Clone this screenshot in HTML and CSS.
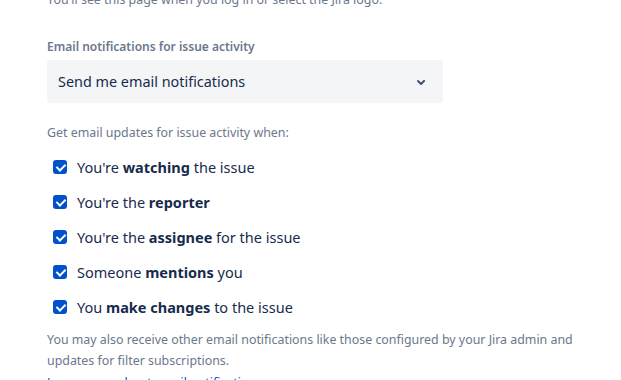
FILE: index.html
```html
<!DOCTYPE html>
<html lang="en">
<head>
    <meta charset="UTF-8">
    <meta name="viewport" content="width=device-width, initial-scale=1.0">
    <title>Email notifications</title>
    <link rel="stylesheet" href="styles.css">
</head>
<body>

    <div class="settings-page">
        <p class="intro">You'll see this page when you log in or select the Jira logo.</p>

        <!-- Email notifications section -->
        <div class="field">
            <label class="field-label" for="emailSelect">Email notifications for issue activity</label>
            <div class="select-box" id="emailSelect">
                <span>Send me email notifications</span>
                <svg class="chevron" width="24" height="24" viewBox="0 0 24 24">
                    <path d="M8.3 10.3a1 1 0 0 1 1.4 0L12 12.6l2.3-2.3a1 1 0 1 1 1.4 1.4l-3 3a1 1 0 0 1-1.4 0l-3-3a1 1 0 0 1 0-1.4z" fill="#42526e"/>
                </svg>
            </div>
        </div>

        <p class="hint">Get email updates for issue activity when:</p>

        <ul class="checkbox-list">
            <li class="checkbox-row"><span class="checkbox"></span><span>You're <b>watching</b> the issue</span></li>
            <li class="checkbox-row"><span class="checkbox"></span><span>You're the <b>reporter</b></span></li>
            <li class="checkbox-row"><span class="checkbox"></span><span>You're the <b>assignee</b> for the issue</span></li>
            <li class="checkbox-row"><span class="checkbox"></span><span>Someone <b>mentions</b> you</span></li>
            <li class="checkbox-row"><span class="checkbox"></span><span>You <b>make changes</b> to the issue</span></li>
        </ul>

        <p class="note">You may also receive other email notifications like those configured by your Jira admin and updates for filter subscriptions.</p>
        <a class="manage-link" href="#">Learn more about email notifications</a>
    </div>

</body>
</html>
```

FILE: styles.css
```css
/* Basic reset */
* {
    margin: 0;
    padding: 0;
    box-sizing: border-box;
}

body {
    font-family: 'Noto Sans', 'Open Sans', sans-serif;
    color: #172b4d;
    background-color: #fff;
    overflow: hidden;
}

/* Page */
.settings-page {
    width: 580px;
    margin-top: -10px;
    padding-left: 47px;
}

.intro,
.hint,
.note {
    font-size: 12.4px;
    line-height: 20px;
    color: #6b778c;
}

/* Select field */
.field {
    margin-top: 29px;
}

.field-label {
    display: block;
    font-size: 12px;
    font-weight: 600;
    line-height: 16px;
    color: #6b778c;
}

.select-box {
    display: flex;
    align-items: center;
    justify-content: space-between;
    width: 396px;
    height: 43px;
    margin-top: 5px;
    padding: 0 10px 0 11px;
    background-color: #f4f5f7;
    border-radius: 3px;
    font-size: 14.4px;
}

.hint {
    margin-top: 20px;
}

/* Checkbox list */
.checkbox-list {
    list-style: none;
    margin-top: 6px;
}

.checkbox-row {
    display: flex;
    align-items: center;
    gap: 10px;
    height: 35px;
    padding-left: 6px;
    font-size: 14.5px;
}

.checkbox {
    position: relative;
    width: 14px;
    height: 14px;
    border-radius: 3px;
    background-color: #0052cc;
}

/* white tick */
.checkbox::after {
    content: "";
    position: absolute;
    left: 4.5px;
    top: 2px;
    width: 4px;
    height: 7px;
    border: solid #fff;
    border-width: 0 2.5px 2.5px 0;
    transform: rotate(45deg);
}

.checkbox-row b {
    font-weight: 700;
}

.note {
    margin-top: 5px;
    line-height: 21px;
}

.manage-link {
    display: block;
    margin-top: 1px;
    font-size: 12.4px;
    line-height: 21px;
    color: #0052cc;
    text-decoration: none;
}
```
